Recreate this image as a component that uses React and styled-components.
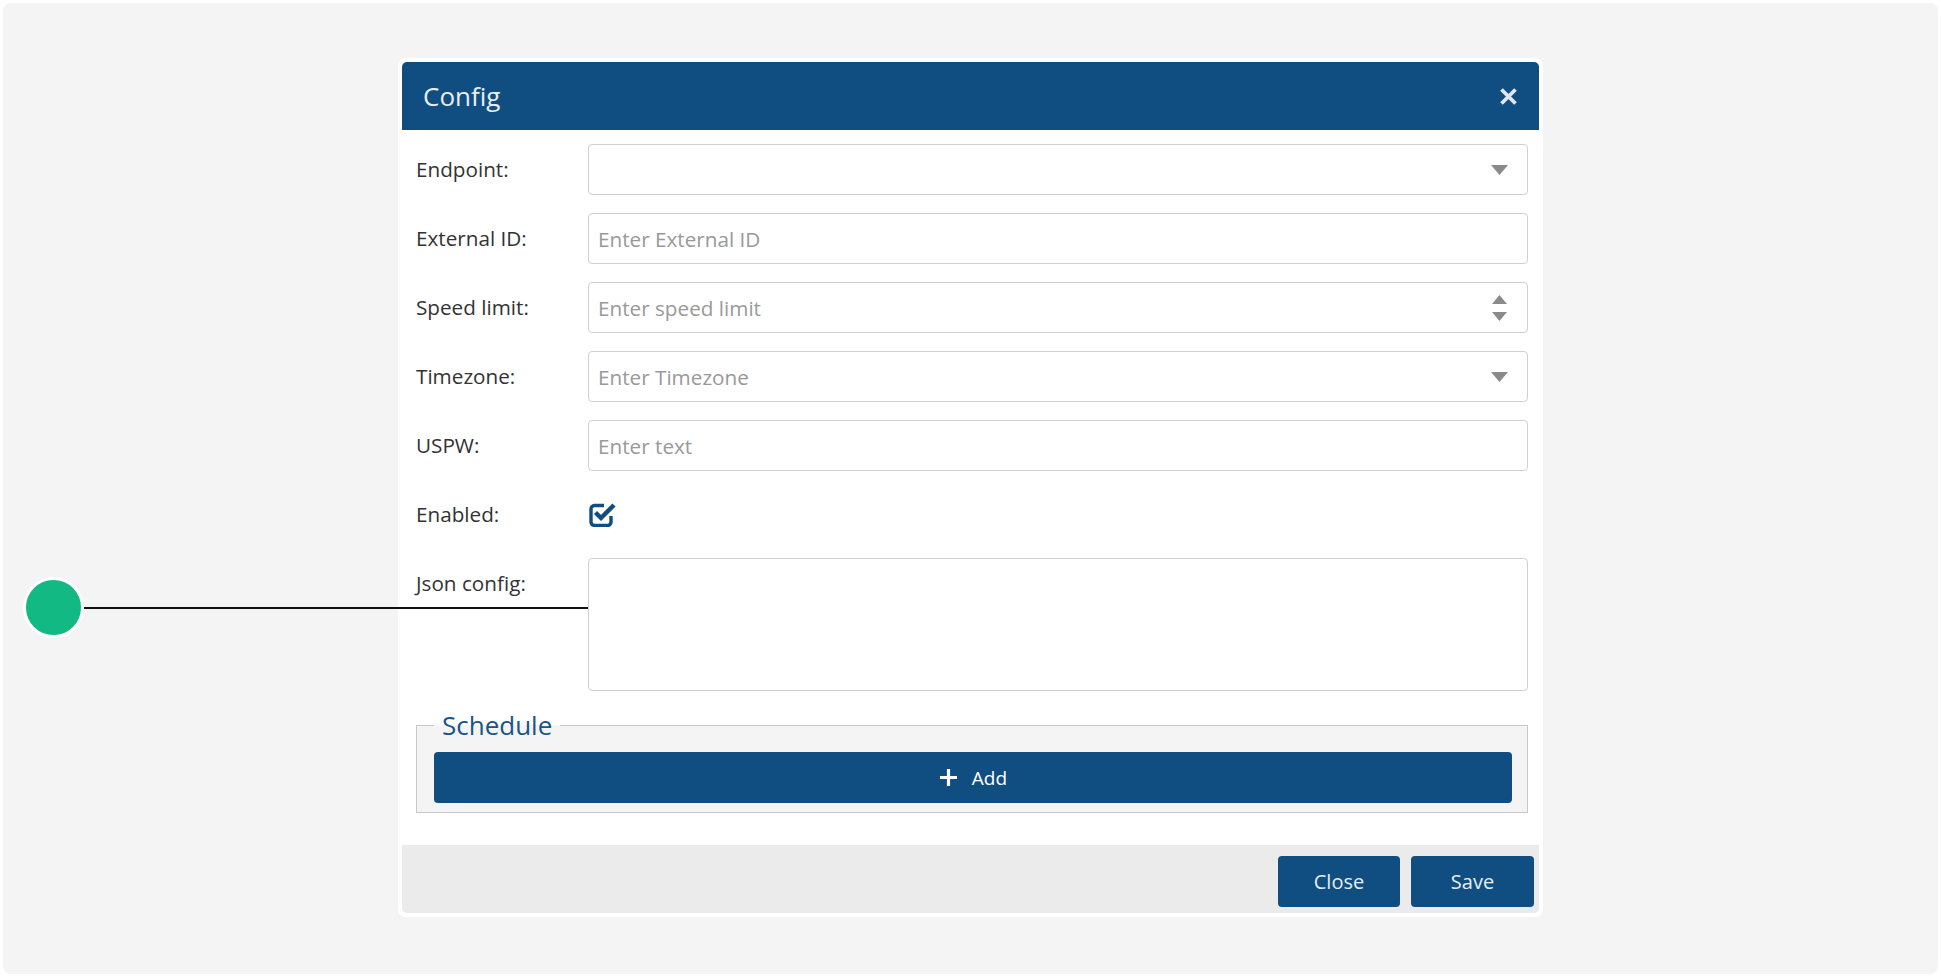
import React from 'react';
import styled, { createGlobalStyle } from 'styled-components';

const blue = '#104d81';

const GlobalStyle = createGlobalStyle`
  html, body {
    margin: 0;
    background: #fff;
    font-family: "Open Sans", "Noto Sans", sans-serif;
  }
  * {
    box-sizing: border-box;
  }
`;

const Page = styled.div`
  position: relative;
  padding: 3px;
`;
const Panel = styled.div`
  height: 971px;
  display: flex;
  justify-content: center;
  align-items: flex-start;
  padding-top: 55px;
  background: #f4f4f4;
  border-radius: 8px;
`;
const Modal = styled.div`
  width: 1145px;
  display: flex;
  flex-direction: column;
  padding: 4px;
  background: #fff;
  border-radius: 8px;
`;
const Header = styled.div`
  height: 68px;
  display: flex;
  align-items: center;
  justify-content: space-between;
  padding: 0 21px 0 21px;
  background: ${blue};
  border-radius: 5px 5px 0 0;
  color: #e8eef4;
`;
const Title = styled.h4`
  margin: 0;
  font-size: 26px;
  font-weight: 400;
`;
const CloseIcon = styled.button`
  display: flex;
  padding: 0;
  border: none;
  background: none;
  cursor: pointer;
`;
const Body = styled.div`
  display: flex;
  flex-direction: column;
  padding: 14px 11px 32px 14px;
`;
const Form = styled.div`
  display: grid;
  grid-template-columns: 172px 1fr;
  row-gap: 18px;
`;
const Label = styled.label`
  height: 51px;
  line-height: 51px;
  font-size: 20.7px;
  color: #333;
`;
const Field = styled.div`
  height: 51px;
  display: flex;
  align-items: center;
  padding: 0 ${(p) => p.$padRight || 9}px 0 9px;
  background: #fff;
  border: 1px solid #d0d0d0;
  border-radius: 4px;
`;
const TextInput = styled.input`
  flex: 1;
  min-width: 0;
  padding: 0;
  border: none;
  outline: none;
  background: transparent;
  font-family: inherit;
  font-size: 20.7px;
  color: #555;

  &::placeholder {
    color: #999;
  }
`;
const Spinner = styled.div`
  display: flex;
  flex-direction: column;
  gap: 8px;
  margin-right: 1px;
`;
const CheckCell = styled.div`
  height: 51px;
  display: flex;
  align-items: center;
  padding-left: 1px;
`;
const TextArea = styled.textarea`
  height: 133px;
  resize: none;
  padding: 9px;
  border: 1px solid #d0d0d0;
  border-radius: 4px;
  outline: none;
  font-family: inherit;
  font-size: 20px;
`;
const Fieldset = styled.fieldset`
  min-width: 0;
  margin: 19px 0 0;
  padding: 12px 15px 9px 17px;
  background: #f4f4f4;
  border: 1px solid #c9c9c9;
`;
const Legend = styled.legend`
  padding: 0 8px;
  font-size: 26px;
  line-height: 30px;
  color: #17558b;
`;
const AddButton = styled.button`
  width: 100%;
  height: 51px;
  display: flex;
  align-items: center;
  justify-content: center;
  gap: 14px;
  background: ${blue};
  border: none;
  border-radius: 4px;
  font-family: inherit;
  font-size: 19px;
  color: #fff;
  cursor: pointer;
`;
const Footer = styled.div`
  height: 68px;
  display: flex;
  justify-content: flex-end;
  align-items: flex-start;
  gap: 11px;
  padding: 11px 5px 0;
  background: #ebebeb;
  border-radius: 0 0 5px 5px;
`;
const FooterButton = styled.button`
  width: ${(p) => p.$width}px;
  height: 51px;
  background: ${blue};
  border: none;
  border-radius: 4px;
  font-family: inherit;
  font-size: 20px;
  color: #e6edf3;
  cursor: pointer;
`;
const Annotation = styled.div`
  position: absolute;
  top: 577px;
  left: 23px;
  display: flex;
  align-items: center;
`;
const Dot = styled.div`
  width: 61px;
  height: 61px;
  background: #13b982;
  border: 3px solid #fff;
  border-radius: 50%;
`;
const Line = styled.div`
  width: 504px;
  height: 2px;
  background: #111;
`;

const Caret = () => (
  <svg width="17" height="10" viewBox="0 0 17 10" aria-hidden="true">
    <path d="M0 0h17L8.5 10z" fill="#8a8a8a" />
  </svg>
);

const SpinArrows = () => (
  <Spinner>
    <svg width="15" height="9" viewBox="0 0 15 9" aria-hidden="true">
      <path d="M7.5 0L15 9H0z" fill="#8a8a8a" />
    </svg>
    <svg width="15" height="9" viewBox="0 0 15 9" aria-hidden="true">
      <path d="M0 0h15L7.5 9z" fill="#8a8a8a" />
    </svg>
  </Spinner>
);

const CheckSquare = () => (
  <svg width="28" height="25" viewBox="0 0 28 25" aria-hidden="true" fill="none" stroke={blue}>
    <path d="M15 3.5H5.5A3.5 3.5 0 0 0 2 7v13a3.5 3.5 0 0 0 3.5 3.5h13A3.5 3.5 0 0 0 22 20v-6" strokeWidth="3.4" />
    <path d="M6.5 10.5l5.5 5.5L25 3" strokeWidth="4.4" />
  </svg>
);

const Cross = () => (
  <svg width="19" height="19" viewBox="0 0 19 19" aria-hidden="true">
    <path d="M2.5 2.5l14 14M16.5 2.5l-14 14" stroke="#dfe7ee" strokeWidth="3.8" />
  </svg>
);

const Plus = () => (
  <svg width="19" height="19" viewBox="0 0 19 19" aria-hidden="true">
    <path d="M9.5 1v17M1 9.5h17" stroke="#fff" strokeWidth="3.2" />
  </svg>
);

export default function App() {
  return (
    <Page>
      <GlobalStyle />
      <Panel>
        <Modal>
          <Header>
            <Title>Config</Title>
            <CloseIcon aria-label="Close">
              <Cross />
            </CloseIcon>
          </Header>

          <Body>
            <Form>
              <Label>Endpoint:</Label>
              <Field $padRight={19}>
                <TextInput />
                <Caret />
              </Field>

              <Label>External ID:</Label>
              <Field>
                <TextInput placeholder="Enter External ID" />
              </Field>

              <Label>Speed limit:</Label>
              <Field $padRight={19}>
                <TextInput placeholder="Enter speed limit" />
                <SpinArrows />
              </Field>

              <Label>Timezone:</Label>
              <Field $padRight={19}>
                <TextInput placeholder="Enter Timezone" />
                <Caret />
              </Field>

              <Label>USPW:</Label>
              <Field>
                <TextInput placeholder="Enter text" />
              </Field>

              <Label>Enabled:</Label>
              <CheckCell>
                <CheckSquare />
              </CheckCell>

              <Label>Json config:</Label>
              <TextArea />
            </Form>

            <Fieldset>
              <Legend>Schedule</Legend>
              <AddButton>
                <Plus />
                Add
              </AddButton>
            </Fieldset>
          </Body>

          <Footer>
            <FooterButton $width={122}>Close</FooterButton>
            <FooterButton $width={123}>Save</FooterButton>
          </Footer>
        </Modal>
      </Panel>

      <Annotation>
        <Dot />
        <Line />
      </Annotation>
    </Page>
  );
}
